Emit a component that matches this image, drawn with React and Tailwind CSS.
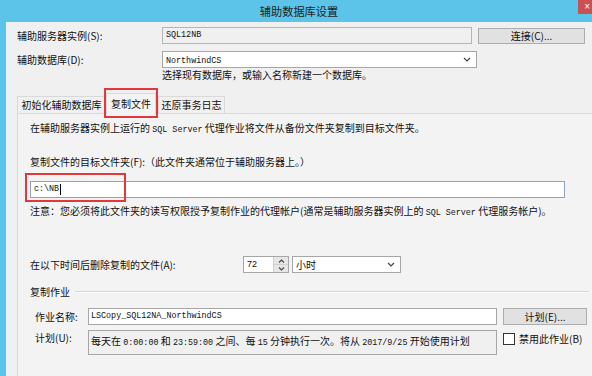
import React from 'react';

const cjk = 'font-["Noto_Sans_CJK_SC","Noto_Sans",sans-serif]';

function M({ children }) {
  return <span className='font-["Liberation_Mono","Noto_Sans_CJK_SC",monospace] text-[8.4px]'>{children}</span>;
}

function Chevron() {
  return (
    <svg width="8" height="5" viewBox="0 0 8 5" className="shrink-0">
      <path d="M1 1 L4 4 L7 1" fill="none" stroke="#444" strokeWidth="1.2" />
    </svg>
  );
}

function Combo({ width, children }) {
  return (
    <div className={`${width} h-[17px] bg-white border border-[#a6a6a6] flex items-center pl-[3px] pr-[5px]`}>
      <div className="flex-1 leading-[14px]">{children}</div>
      <Chevron />
    </div>
  );
}

export default function App() {
  return (
    <div className={`w-[592px] h-[376px] overflow-hidden bg-[#5cc4e8] flex flex-col text-[10px] text-[#111] ${cjk}`}>
      {/* title bar */}
      <div className="h-[22px] shrink-0 grid grid-cols-[1fr_auto_1fr] items-start">
        <div />
        <div className="pt-[3px] pl-[6px] text-[11.2px] leading-[16px] text-[#222]">辅助数据库设置</div>
        <div className="flex justify-end">
          <div className="w-[14px] h-[14px] bg-[#c9514f] flex items-center justify-end pr-[2px] text-white text-[10px] leading-none font-['Liberation_Sans']">×</div>
        </div>
      </div>

      {/* body */}
      <div className="flex-1 ml-[6px] bg-[#f0f0f0] pl-[11px] flex flex-col">
        {/* server row */}
        <div className="mt-[5px] flex items-center h-[17px]">
          <div className="w-[145px] leading-[14px]">辅助服务器实例(S):</div>
          <div className="w-[310px] h-[17px] border border-[#b5b5b5] bg-[#f0f0f0] flex items-center pl-[3px]">
            <M>SQL12NB</M>
          </div>
          <div className="ml-[6px] w-[107px] h-[16px] border border-[#adadad] bg-[#e1e1e1] flex items-center justify-center leading-[14px]">
            连接(C)...
          </div>
        </div>

        {/* database row */}
        <div className="mt-[7px] flex items-center h-[17px]">
          <div className="w-[145px] leading-[14px]">辅助数据库(D):</div>
          <Combo width="w-[315px]"><M>NorthwindCS</M></Combo>
        </div>
        <div className="ml-[145px] h-[14px] leading-[14px]">选择现有数据库，或输入名称新建一个数据库。</div>

        {/* tabs */}
        <div className="h-[31px] flex items-end shrink-0">
          <div className="w-[89px] h-[17px] border border-b-0 border-[#d9d9d9] bg-[#f0f0f0] flex items-center justify-center leading-[14px]">
            初始化辅助数据库
          </div>
          <div className="relative z-10 -mb-px w-[50px] h-[21px] border border-b-0 border-[#d9d9d9] bg-[#f3f3f3] flex items-center justify-center leading-[14px]">
            复制文件
            <div className="absolute -left-[3px] -top-[6px] w-[54px] h-[30px] border-2 border-[#e0383b]" />
          </div>
          <div className="ml-[2px] w-[67px] h-[17px] border border-b-0 border-[#d9d9d9] bg-[#f0f0f0] flex items-center justify-center leading-[14px]">
            还原事务日志
          </div>
        </div>

        {/* tab page */}
        <div className="flex-1 border border-r-0 border-b-0 border-[#d9d9d9] bg-[#f3f3f3] pl-[12px] pt-[7px] flex flex-col">
          <div className="h-[14px] leading-[14px]">
            在辅助服务器实例上运行的 <M>SQL Server</M> 代理作业将文件从备份文件夹复制到目标文件夹。
          </div>
          <div className="mt-[20px] h-[14px] leading-[14px]">
            复制文件的目标文件夹(F):（此文件夹通常位于辅助服务器上。）
          </div>
          <div className="relative mt-[12px] w-[535px] h-[17px] bg-white border border-[#8ea3c4] flex items-center pl-[3px]">
            <M>c:\NB</M>
            <span className="ml-px w-px h-[11px] bg-black" />
            <div className="absolute -left-[6px] -top-[9px] w-[101px] h-[29px] border-2 border-[#e0383b]" />
          </div>
          <div className="mt-[6px] h-[14px] leading-[14px]">
            注意：您必须将此文件夹的读写权限授予复制作业的代理帐户(通常是辅助服务器实例上的 <M>SQL Server</M> 代理服务帐户)。
          </div>

          {/* delete after */}
          <div className="mt-[38px] flex items-center h-[17px]">
            <div className="w-[213px] leading-[14px]">在以下时间后删除复制的文件(A):</div>
            <div className="w-[46px] h-[17px] bg-white border border-[#a6a6a6] flex">
              <div className="flex-1 pl-[3px] flex items-center text-[9px] font-['Liberation_Sans']">72</div>
              <div className="w-[15px] flex flex-col bg-[#e6e6e6] border-l border-[#d0d0d0]">
                <div className="flex-1 flex items-center justify-center border-b border-[#d0d0d0]">
                  <svg width="7" height="4" viewBox="0 0 7 4"><path d="M1 3.5 L3.5 1 L6 3.5" fill="none" stroke="#444" strokeWidth="1.1" /></svg>
                </div>
                <div className="flex-1 flex items-center justify-center">
                  <svg width="7" height="4" viewBox="0 0 7 4"><path d="M1 0.5 L3.5 3 L6 0.5" fill="none" stroke="#444" strokeWidth="1.1" /></svg>
                </div>
              </div>
            </div>
            <div className="ml-[3px]">
              <Combo width="w-[109px]">小时</Combo>
            </div>
          </div>

          {/* group */}
          <div className="mt-[12px] h-[14px] flex items-center">
            <div className="leading-[14px]">复制作业</div>
            <div className="ml-[5px] flex-1 mr-[3px] h-[2px] border-t border-[#d5d5d5] border-b border-b-white" />
          </div>

          <div className="mt-[9px] flex items-center h-[17px]">
            <div className="pl-[5px] w-[58px] leading-[14px]">作业名称:</div>
            <div className="w-[409px] h-[17px] bg-white border border-[#a6a6a6] flex items-center pl-[2px]">
              <M>LSCopy_SQL12NA_NorthwindCS</M>
            </div>
            <div className="ml-[6px] w-[84px] h-[17px] border border-[#adadad] bg-[#e1e1e1] flex items-center justify-center leading-[14px]">
              计划(E)...
            </div>
          </div>

          <div className="mt-[5px] flex items-start">
            <div className="pl-[5px] w-[58px] leading-[14px] pt-px">计划(U):</div>
            <div className="w-[409px] h-[25px] bg-[#f0f0f0] border border-[#a6a6a6] pl-[2px] pt-[3px] leading-[14px] whitespace-nowrap">
              每天在 <M>0:00:00</M> 和 <M>23:59:00</M> 之间、每 <M>15</M> 分钟执行一次。将从 <M>2017/9/25</M> 开始使用计划
            </div>
            <div className="ml-[6px] mt-[2px] flex items-center">
              <div className="w-[12px] h-[12px] bg-white border border-[#333]" />
              <div className="ml-[4px] leading-[14px]">禁用此作业(B)</div>
            </div>
          </div>
        </div>
      </div>
    </div>
  );
}
